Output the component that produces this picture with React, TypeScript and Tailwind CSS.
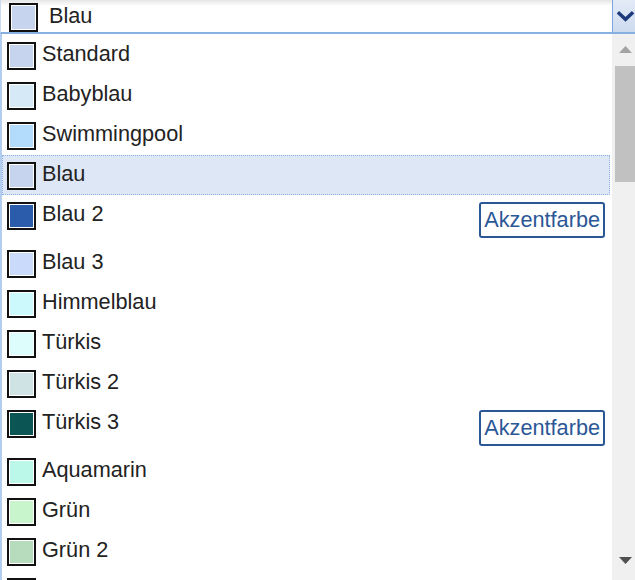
import { ReactNode } from 'react'

type Item = { name: string; color: string; accent?: boolean; selected?: boolean }

const items: Item[] = [
  { name: 'Standard', color: '#c6d4ee' },
  { name: 'Babyblau', color: '#d5e9f7' },
  { name: 'Swimmingpool', color: '#b3dbfb' },
  { name: 'Blau', color: '#c6d4ee', selected: true },
  { name: 'Blau 2', color: '#2b5cab', accent: true },
  { name: 'Blau 3', color: '#c9dafa' },
  { name: 'Himmelblau', color: '#ccfafc' },
  { name: 'Türkis', color: '#dcfdfc' },
  { name: 'Türkis 2', color: '#cfe3e4' },
  { name: 'Türkis 3', color: '#0c5555', accent: true },
  { name: 'Aquamarin', color: '#bcf8e9' },
  { name: 'Grün', color: '#c9f5cd' },
  { name: 'Grün 2', color: '#b7dcbd' },
  { name: 'Grün 3', color: '#d2f7d0' },
]

function Swatch({ color }: { color: string }) {
  return (
    <span
      className="block w-[29px] h-[28px] shrink-0 border-2 border-[#111] shadow-[inset_0_0_0_1px_#ffffff]"
      style={{ backgroundColor: color }}
    />
  )
}

function Row({ item }: { item: Item }): ReactNode {
  return (
    <div
      className={
        item.selected
          ? 'flex items-start mr-[2px] pl-[4px] pr-[4px] pt-[6px] pb-[4px] border border-dotted border-[#8cb1ea] bg-[#dee7f6]'
          : 'flex items-start mr-[2px] pl-[4px] pr-[4px] pt-[6px] pb-[4px] border border-transparent'
      }
    >
      <Swatch color={item.color} />
      <span className="ml-[6px] leading-[24px] text-[#222]">{item.name}</span>
      {item.accent && (
        <span className="ml-auto h-[36px] px-[3px] border-2 border-[#2b5797] rounded-[3px] text-[#2b5797] leading-[32px]">
          Akzentfarbe
        </span>
      )}
    </div>
  )
}

export default function App() {
  return (
    <div className="w-[635px] h-[580px] overflow-hidden bg-white font-['Liberation_Sans',Arial,sans-serif] text-[21.7px]">
      {/* Select */}
      <div className="flex h-[34px] border-b-2 border-[#86afe2] border-l border-l-[#c9daf1] bg-[linear-gradient(#e6e6e6,#ffffff_6px)]">
        <div className="flex items-center flex-1 pl-[8px]">
          <span
            className="block w-[29px] h-[29px] mt-[2px] border-2 border-[#111] shadow-[inset_0_0_0_1px_#ffffff]"
            style={{ backgroundColor: '#c6d4ee' }}
          />
          <span className="ml-[11px] text-[#222]">Blau</span>
        </div>
        <div className="w-[23px] border-l border-[#7ea6dd] bg-[linear-gradient(#e3ebf7,#cddbef)] flex items-center pl-[3px]">
          <svg width="20" height="12" viewBox="0 0 20 12">
            <polyline points="2,2 10,9.5 18,2" fill="none" stroke="#1c3a7c" strokeWidth="3.6" />
          </svg>
        </div>
      </div>

      {/* List */}
      <div className="flex h-[546px]">
        <div className="flex-1 border-l-2 border-[#b3cdef] pt-[1px]">
          {items.map(item => (
            <Row key={item.name} item={item} />
          ))}
        </div>
        <div className="w-[23px] bg-[#f0f0f0] flex flex-col items-stretch">
          <div className="h-[32px] flex items-center justify-center pl-[4px]">
            <svg width="13" height="8" viewBox="0 0 13 8">
              <polygon points="0,7 6.5,0 13,7" fill="#a3a3a3" />
            </svg>
          </div>
          <div className="ml-[3px] h-[116px] bg-[#c1c1c1]" />
          <div className="flex-1" />
          <div className="h-[26px] flex items-start justify-center pl-[4px] pt-[3px]">
            <svg width="13" height="8" viewBox="0 0 13 8">
              <polygon points="0,0 13,0 6.5,7" fill="#505050" />
            </svg>
          </div>
        </div>
      </div>
    </div>
  )
}
